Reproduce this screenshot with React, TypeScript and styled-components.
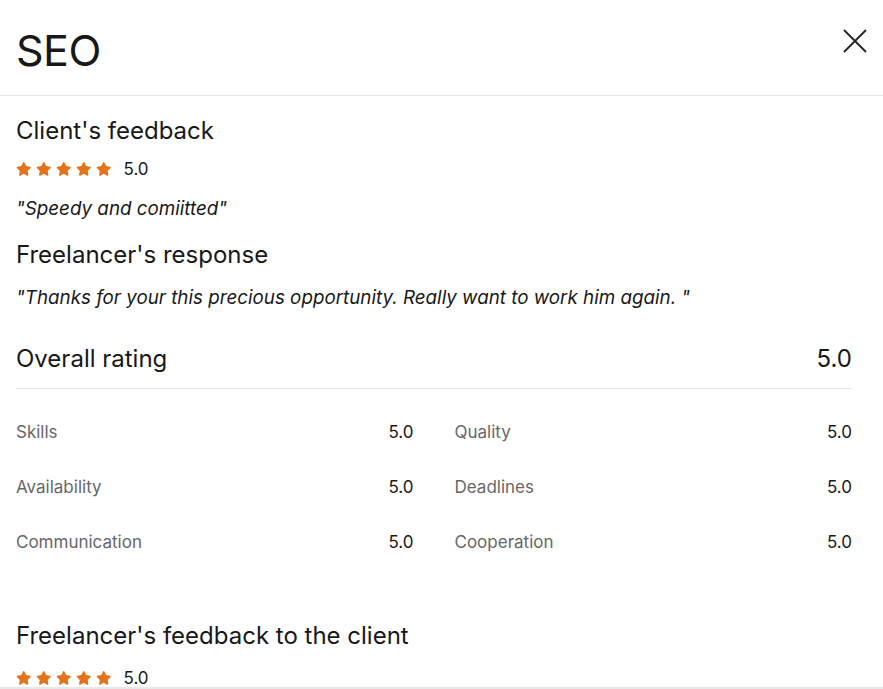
import styled, { createGlobalStyle } from "styled-components"

const GlobalStyle = createGlobalStyle`
  html, body {
    margin: 0;
    padding: 0;
    background: #ffffff;
  }
  body {
    font-family: Inter, "Liberation Sans", Arial, sans-serif;
    color: #181818;
    overflow: hidden;
  }
`

const Modal = styled.div`
  display: flex;
  flex-direction: column;
  width: 883px;
  height: 689px;
  background: #fff;
`

const Header = styled.header`
  display: flex;
  align-items: center;
  justify-content: space-between;
  height: 96px;
  padding: 0 16px;
  border-bottom: 1px solid #e6e6e6;
  box-sizing: border-box;
  flex-shrink: 0;
`

const Title = styled.h1`
  margin: 6px 0 0;
  font-size: 43px;
  font-weight: 400;
  letter-spacing: -0.5px;
  line-height: 1;
  color: #181818;
`

const CloseButton = styled.button`
  display: flex;
  align-items: center;
  justify-content: center;
  width: 24px;
  height: 24px;
  padding: 0;
  margin-top: -14px;
  border: 0;
  background: none;
  color: #222;
  cursor: pointer;
`

const Body = styled.div`
  flex: 1;
  overflow: hidden;
  padding: 19px 31px 0 16px;
  border-bottom: 2px solid #e8e8e8;
`

const SectionTitle = styled.h2<{ $space?: number }>`
  margin: ${({ $space }) => $space ?? 0}px 0 0;
  font-size: 24px;
  font-weight: 400;
  line-height: 32px;
  color: #181818;
`

const StarRow = styled.div<{ $space?: number }>`
  display: flex;
  align-items: center;
  height: 20px;
  margin-top: ${({ $space }) => $space ?? 12}px;
`

const Stars = styled.div`
  display: flex;
  gap: 4.5px;
  margin-right: 12px;
  color: #e4741b;
`

const Score = styled.span`
  font-size: 17px;
  line-height: 20px;
  color: #181818;
`

const Quote = styled.p<{ $space?: number }>`
  margin: ${({ $space }) => $space ?? 15}px 0 0;
  font-size: 18.8px;
  font-style: italic;
  line-height: 24px;
  color: #181818;
`

const OverallRow = styled.div`
  display: flex;
  justify-content: space-between;
  align-items: center;
  margin-top: 33px;
  padding-bottom: 13px;
  border-bottom: 1px solid #e6e6e6;
  font-size: 24px;
  line-height: 32px;
`

const Grid = styled.div`
  display: grid;
  grid-template-columns: 1fr 1fr;
  column-gap: 41px;
  row-gap: 31px;
  margin-top: 31px;
`

const MetricRow = styled.div`
  display: flex;
  justify-content: space-between;
  font-size: 17px;
  line-height: 24px;
`

const MetricLabel = styled.span`
  color: #676767;
`

const MetricValue = styled.span`
  color: #181818;
`

const Star = () => (
  <svg width="15.5" height="15.5" viewBox="0 0 24 24" fill="currentColor">
    <path d="M12 1.6c.5 0 .9.3 1.1.7l2.7 5.6 6.1.9c.5.1.9.4 1 .9.2.5 0 1-.3 1.3l-4.4 4.3 1 6.1c.1.5-.1 1-.5 1.3-.4.3-.9.3-1.3.1L12 19.9l-5.4 2.9c-.4.2-1 .2-1.3-.1-.4-.3-.6-.8-.5-1.3l1-6.1-4.4-4.3c-.4-.3-.5-.8-.3-1.3.1-.5.5-.8 1-.9l6.1-.9 2.7-5.6c.2-.4.6-.7 1.1-.7z" />
  </svg>
)

const Rating = ({ value, space }: { value: string; space?: number }) => (
  <StarRow $space={space}>
    <Stars>
      {[0, 1, 2, 3, 4].map((i) => (
        <Star key={i} />
      ))}
    </Stars>
    <Score>{value}</Score>
  </StarRow>
)

const metrics = [
  ["Skills", "5.0"],
  ["Quality", "5.0"],
  ["Availability", "5.0"],
  ["Deadlines", "5.0"],
  ["Communication", "5.0"],
  ["Cooperation", "5.0"],
]

export default function App() {
  return (
    <>
      <GlobalStyle />
      <Modal>
        <Header>
          <Title>SEO</Title>
          <CloseButton aria-label="Close">
            <svg width="24" height="24" viewBox="0 0 24 24" fill="none" stroke="currentColor" strokeWidth="1.8">
              <path d="M1 1l22 22M23 1L1 23" />
            </svg>
          </CloseButton>
        </Header>
        <Body>
          <SectionTitle>Client's feedback</SectionTitle>
          <Rating value="5.0" />
          <Quote $space={18}>"Speedy and comiitted"</Quote>
          <SectionTitle $space={18}>Freelancer's response</SectionTitle>
          <Quote>"Thanks for your this precious opportunity. Really want to work him again. "</Quote>
          <OverallRow>
            <span>Overall rating</span>
            <span>5.0</span>
          </OverallRow>
          <Grid>
            {metrics.map(([label, value]) => (
              <MetricRow key={label}>
                <MetricLabel>{label}</MetricLabel>
                <MetricValue>{value}</MetricValue>
              </MetricRow>
            ))}
          </Grid>
          <SectionTitle $space={66}>Freelancer's feedback to the client</SectionTitle>
          <Rating value="5.0" space={16} />
        </Body>
      </Modal>
    </>
  )
}
